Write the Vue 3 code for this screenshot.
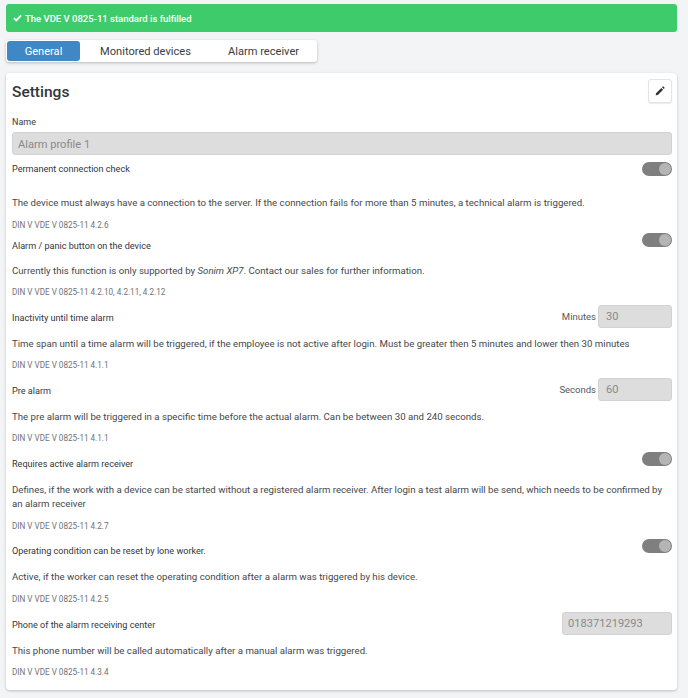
<template>
  <div class="page">
    <div class="alert">
      <svg class="check" viewBox="0 0 12 10" width="9" height="8">
        <path d="M1.2 5.2 4.4 8.2 10.8 1.6" fill="none" stroke="#fff" stroke-width="2.4" />
      </svg>
      The VDE V 0825-11 standard is fulfilled
    </div>

    <div class="tabs">
      <button v-for="t in tabs" :key="t.label" class="tab" :class="{ active: t.active }" :style="{ width: t.width + 'px' }">
        {{ t.label }}
      </button>
    </div>

    <div class="card">
      <div class="card-head">
        <h2>Settings</h2>
        <button class="edit">
          <svg viewBox="0 0 12 12" width="10" height="10">
            <path d="M0.8 11.2 1.3 8.6 7.6 2.3 9.7 4.4 3.4 10.7Z M8.4 1.5 9.3 0.7Q9.8 0.3 10.3 0.7L11.3 1.7Q11.7 2.2 11.3 2.7L10.5 3.6Z" fill="#333" />
          </svg>
        </button>
      </div>

      <div class="name-label">Name</div>
      <div class="field wide">Alarm profile 1</div>

      <section v-for="s in settings" :key="s.title" class="setting" :class="s.cls">
        <div class="head">
          <span class="title">{{ s.title }}</span>
          <span v-if="s.toggle" class="toggle"><i></i></span>
          <span v-if="s.unit" class="unit">{{ s.unit }}</span>
          <span v-if="s.value" class="field" :class="s.fieldCls || 'small'">{{ s.value }}</span>
        </div>
        <p class="desc">
          {{ s.desc }}<em v-if="s.em">{{ s.em }}</em>{{ s.after }}
        </p>
        <div class="din">{{ s.din }}</div>
      </section>
    </div>
  </div>
</template>

<script setup>
const tabs = [
  { label: 'General', active: true, width: 73 },
  { label: 'Monitored devices', width: 131 },
  { label: 'Alarm receiver', width: 105 }
]

const settings = [
  {
    title: 'Permanent connection check',
    toggle: true,
    cls: 'first',
    desc: 'The device must always have a connection to the server. If the connection fails for more than 5 minutes, a technical alarm is triggered.',
    din: 'DIN V VDE V 0825-11 4.2.6'
  },
  {
    title: 'Alarm / panic button on the device',
    toggle: true,
    cls: 'second',
    desc: 'Currently this function is only supported by ',
    em: 'Sonim XP7',
    after: '. Contact our sales for further information.',
    din: 'DIN V VDE V 0825-11 4.2.10, 4.2.11, 4.2.12'
  },
  {
    title: 'Inactivity until time alarm',
    unit: 'Minutes',
    value: '30',
    desc: 'Time span until a time alarm will be triggered, if the employee is not active after login. Must be greater then 5 minutes and lower then 30 minutes',
    din: 'DIN V VDE V 0825-11 4.1.1'
  },
  {
    title: 'Pre alarm',
    unit: 'Seconds',
    value: '60',
    desc: 'The pre alarm will be triggered in a specific time before the actual alarm. Can be between 30 and 240 seconds.',
    din: 'DIN V VDE V 0825-11 4.1.1'
  },
  {
    title: 'Requires active alarm receiver',
    toggle: true,
    desc: 'Defines, if the work with a device can be started without a registered alarm receiver. After login a test alarm will be send, which needs to be confirmed by an alarm receiver',
    din: 'DIN V VDE V 0825-11 4.2.7'
  },
  {
    title: 'Operating condition can be reset by lone worker.',
    toggle: true,
    desc: 'Active, if the worker can reset the operating condition after a alarm was triggered by his device.',
    din: 'DIN V VDE V 0825-11 4.2.5'
  },
  {
    title: 'Phone of the alarm receiving center',
    value: '018371219293',
    fieldCls: 'phone',
    desc: 'This phone number will be called automatically after a manual alarm was triggered.',
    din: 'DIN V VDE V 0825-11 4.3.4'
  }
]
</script>

<style>
html,
body {
  margin: 0;
  background: #f3f4f6;
}
</style>

<style scoped>
.page {
  width: 688px;
  height: 698px;
  padding: 4px 11px 0 6px;
  box-sizing: border-box;
  overflow: hidden;
  font-family: Roboto, sans-serif;
  color: #3a3d42;
}

.alert {
  height: 28px;
  display: flex;
  align-items: center;
  gap: 3px;
  padding-left: 7px;
  background: #3ecb6c;
  border-radius: 3px;
  color: #fff;
  font-size: 9.5px;
  font-weight: 500;
}

.tabs {
  display: inline-flex;
  margin: 8px 0 0;
  background: #fff;
  border-radius: 3px;
  box-shadow: 0 1px 3px rgba(0, 0, 0, 0.25);
  vertical-align: top;
  padding-left: 1px;
  padding-right: 1px;
}

.tab {
  height: 20px;
  margin: 1px 0;
  padding: 0;
  border: 0;
  border-radius: 3px;
  background: none;
  font: 400 11.1px Roboto, sans-serif;
  color: #3a3d42;
}

.tab.active {
  background: #3f88c5;
  color: #fff;
}

.card {
  margin-top: 11px;
  height: 617px;
  box-sizing: border-box;
  padding: 6px 5px 0 6px;
  background: #fff;
  border-radius: 4px;
  box-shadow: 0 1px 3px rgba(0, 0, 0, 0.22);
}

.card-head {
  display: flex;
  justify-content: space-between;
  align-items: center;
  height: 24px;
}

h2 {
  margin: 1px 0 0;
  font-size: 15.5px;
  font-weight: 500;
  color: #33363b;
}

.edit {
  width: 24px;
  height: 24px;
  padding: 0;
  display: flex;
  align-items: center;
  justify-content: center;
  background: #fff;
  border: 1px solid #e4e4e4;
  border-radius: 3px;
  box-shadow: 0 1px 1px rgba(0, 0, 0, 0.08);
}

.name-label {
  margin-top: 13px;
  font-size: 9px;
  line-height: 12px;
  color: #3a3d42;
}

.field {
  box-sizing: border-box;
  display: flex;
  align-items: center;
  height: 23px;
  padding-left: 5px;
  background: #dddddd;
  border: 1px solid #d2d2d2;
  border-radius: 3px;
  color: #8a8a8a;
  font-size: 11.1px;
}

.field.wide {
  margin-top: 4px;
  padding-top: 1px;
}

.field.small {
  width: 74px;
  margin-left: 2px;
  padding-left: 7px;
}

.field.phone {
  width: 110px;
  margin-left: auto;
}

.setting {
  padding-bottom: 6.25px;
}

.head {
  display: flex;
  align-items: center;
  height: 23px;
}

.title {
  padding-top: 2px;
  font-size: 9.1px;
  font-weight: 400;
  color: #33363b;
}

.unit {
  margin-left: auto;
  font-size: 9.5px;
  color: #55585c;
}

.toggle {
  position: relative;
  margin-left: auto;
  margin-bottom: 8px;
  width: 30px;
  height: 14px;
  border-radius: 7px;
  background: #7f7f7f;
}

.toggle i {
  position: absolute;
  top: 1px;
  right: 1px;
  width: 12px;
  height: 12px;
  border-radius: 50%;
  background: #b5b5b5;
}

.desc {
  margin: 8.5px 0 0;
  font-size: 9.67px;
  line-height: 14px;
  color: #44474c;
}

.din {
  margin-top: 7.5px;
  font-size: 8.15px;
  line-height: 14px;
  color: #707275;
}

.first {
  padding-bottom: 2px;
}

.first .head {
  margin-top: 7px;
  height: 14px;
}

.first .title {
  padding-top: 0;
}

.first .toggle {
  margin-bottom: 0;
}

.first .desc {
  margin-top: 20px;
}

.first .din {
  margin-top: 8px;
}

.second {
  padding-bottom: 6px;
}

.second .head {
  margin-top: 5px;
  height: 14px;
}

.second .title {
  padding-top: 0;
}

.second .toggle {
  margin-bottom: 12px;
}

.second .desc {
  margin-top: 11px;
}

.second .din {
  margin-top: 7px;
}
</style>
